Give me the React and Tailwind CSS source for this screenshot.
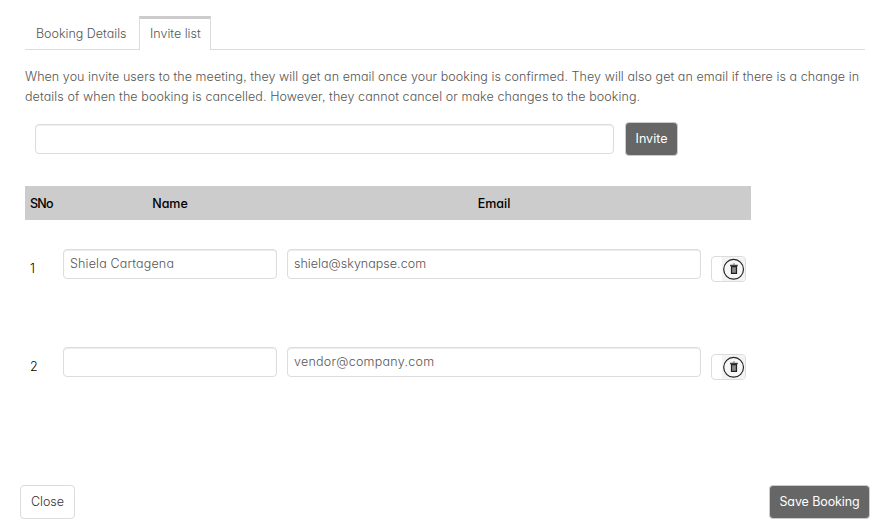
import React from 'react';

const field =
  'block h-[30px] rounded-[4px] border border-[#dcdcdc] bg-white px-[6px] pb-[2px] text-[12.5px] text-[#555] shadow-[inset_0_1px_1px_rgba(0,0,0,0.075)] outline-none';

function TrashIcon() {
  return (
    <svg width="23" height="24" viewBox="0 0 23 24" className="block">
      <rect width="23" height="24" fill="#f3f3f3" />
      <circle cx="11.6" cy="12.3" r="9.9" fill="#f7f7f7" stroke="#252525" strokeWidth="1.2" />
      <path d="M10.8 6.4h2.2v1.2h-2.2z" fill="#888" />
      <path d="M8 7.8h7.8v1.4H8z" fill="#444" />
      <path d="M9.5 9.7h5v6.6h-5z" fill="#888" stroke="#222" strokeWidth="1.2" />
    </svg>
  );
}

function Row({ number, name, email, emailTracking }) {
  return (
    <div className="flex h-[98px] items-start pl-[5px] pt-[12px]">
      <div className="w-[33px] pt-[10px] leading-5 text-black">{number}</div>
      <input className={`${field} w-[214px] tracking-[0.16px]`} defaultValue={name} aria-label="Name" />
      <input className={`${field} ml-[10px] w-[414px] ${emailTracking}`} defaultValue={email} aria-label="Email" />
      <button
        aria-label="Remove"
        className="ml-[10px] mt-[7px] flex h-[26px] w-[35px] justify-end overflow-hidden rounded-[4px] border border-[#dcdcdc] bg-white"
      >
        <TrashIcon />
      </button>
    </div>
  );
}

export default function App() {
  return (
    <div className="h-[531px] w-[887px] overflow-hidden bg-white pt-4 font-['Inter','Open_Sans',sans-serif] text-[12.5px] font-light text-[#555] [font-feature-settings:'cv11','ss03']">
      <nav className="ml-[25px] flex h-[34px] w-[840px] border-b border-[#dcdcdc]">
        <div className="w-[114px] whitespace-nowrap pl-[11px] pt-[8px] leading-5">Booking Details</div>
        <div className="h-[34px] w-[72px] whitespace-nowrap border-x border-t-[3px] border-x-[#dcdcdc] border-t-[#ccc] bg-white pl-[10px] pt-[5px] leading-5">
          Invite list
        </div>
      </nav>
      <p className="ml-[25px] mt-[17px] whitespace-nowrap leading-5">
        <span className="block tracking-[0.063px]">
          When you invite users to the meeting, they will get an email once your booking is confirmed. They will also get an email if there is a change in
        </span>
        <span className="block tracking-[0.09px]">
          details of when the booking is cancelled. However, they cannot cancel or make changes to the booking.
        </span>
      </p>
      <div className="ml-[35px] mt-[15px] flex h-[34px] items-start">
        <input className={`${field} mt-[2px] w-[579px]`} aria-label="Invite user" />
        <button className="ml-[11px] h-[34px] w-[53px] rounded-[4px] border border-[#ccc] bg-[#666] font-normal text-white">
          Invite
        </button>
      </div>
      <div className="ml-[25px] mt-[30px] w-[726px]">
        <div className="flex h-[34px] items-center bg-[#ccc] pt-[2px] font-medium text-black">
          <div className="w-[33px] pl-[5px] tracking-[-0.8px]">SNo</div>
          <div className="w-[224px] text-center">Name</div>
          <div className="w-[424px] text-center">Email</div>
        </div>
        <div className="pt-[17px]">
          <Row number="1" name="Shiela Cartagena" email="shiela@skynapse.com" emailTracking="tracking-[0.03px]" />
          <Row number="2" name="" email="vendor@company.com" emailTracking="tracking-[0.26px]" />
        </div>
      </div>
      <footer className="ml-[20px] mt-[52px] flex w-[850px] justify-between">
        <button className="h-[34px] w-[55px] rounded-[4px] border border-[#dcdcdc] bg-white text-[#333]">Close</button>
        <button className="h-[34px] w-[101px] whitespace-nowrap rounded-[4px] border border-[#ccc] bg-[#666] font-normal tracking-[-0.1px] text-white">
          Save Booking
        </button>
      </footer>
    </div>
  );
}
